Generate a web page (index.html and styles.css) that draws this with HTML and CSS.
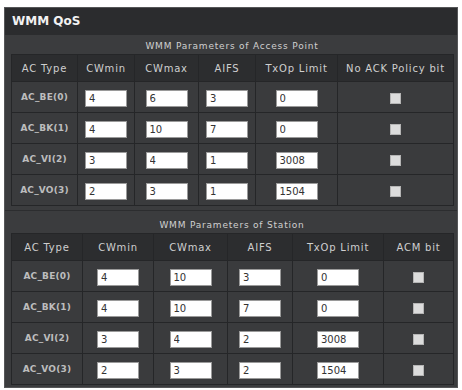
FILE: index.html
```html
<!DOCTYPE html>
<html lang="en">
<head>
    <meta charset="UTF-8">
    <title>WMM QoS</title>
    <link rel="stylesheet" href="styles.css">
</head>
<body>
    <div class="panel">
        <div class="panel-title">WMM QoS</div>

        <div class="section">
            <div class="caption">WMM Parameters of Access Point</div>
            <table class="wmm ap">
                <colgroup>
                    <col style="width:66px">
                    <col style="width:57px">
                    <col style="width:64px">
                    <col style="width:57px">
                    <col style="width:82px">
                    <col style="width:116px">
                </colgroup>
                <tr>
                    <th>AC Type</th>
                    <th>CWmin</th>
                    <th>CWmax</th>
                    <th>AIFS</th>
                    <th>TxOp Limit</th>
                    <th>No ACK Policy bit</th>
                </tr>
                <tr>
                    <td class="ac">AC_BE(0)</td>
                    <td><input type="text" value="4"></td>
                    <td><input type="text" value="6"></td>
                    <td><input type="text" value="3"></td>
                    <td><input type="text" value="0"></td>
                    <td><input type="checkbox"></td>
                </tr>
                <tr>
                    <td class="ac">AC_BK(1)</td>
                    <td><input type="text" value="4"></td>
                    <td><input type="text" value="10"></td>
                    <td><input type="text" value="7"></td>
                    <td><input type="text" value="0"></td>
                    <td><input type="checkbox"></td>
                </tr>
                <tr>
                    <td class="ac">AC_VI(2)</td>
                    <td><input type="text" value="3"></td>
                    <td><input type="text" value="4"></td>
                    <td><input type="text" value="1"></td>
                    <td><input type="text" value="3008"></td>
                    <td><input type="checkbox"></td>
                </tr>
                <tr>
                    <td class="ac">AC_VO(3)</td>
                    <td><input type="text" value="2"></td>
                    <td><input type="text" value="3"></td>
                    <td><input type="text" value="1"></td>
                    <td><input type="text" value="1504"></td>
                    <td><input type="checkbox"></td>
                </tr>
            </table>
        </div>

        <div class="section station">
            <div class="caption">WMM Parameters of Station</div>
            <table class="wmm">
                <colgroup>
                    <col style="width:71px">
                    <col style="width:71px">
                    <col style="width:74px">
                    <col style="width:65px">
                    <col style="width:91px">
                    <col style="width:70px">
                </colgroup>
                <tr>
                    <th>AC Type</th>
                    <th>CWmin</th>
                    <th>CWmax</th>
                    <th>AIFS</th>
                    <th>TxOp Limit</th>
                    <th>ACM bit</th>
                </tr>
                <tr>
                    <td class="ac">AC_BE(0)</td>
                    <td><input type="text" value="4"></td>
                    <td><input type="text" value="10"></td>
                    <td><input type="text" value="3"></td>
                    <td><input type="text" value="0"></td>
                    <td><input type="checkbox"></td>
                </tr>
                <tr>
                    <td class="ac">AC_BK(1)</td>
                    <td><input type="text" value="4"></td>
                    <td><input type="text" value="10"></td>
                    <td><input type="text" value="7"></td>
                    <td><input type="text" value="0"></td>
                    <td><input type="checkbox"></td>
                </tr>
                <tr>
                    <td class="ac">AC_VI(2)</td>
                    <td><input type="text" value="3"></td>
                    <td><input type="text" value="4"></td>
                    <td><input type="text" value="2"></td>
                    <td><input type="text" value="3008"></td>
                    <td><input type="checkbox"></td>
                </tr>
                <tr>
                    <td class="ac">AC_VO(3)</td>
                    <td><input type="text" value="2"></td>
                    <td><input type="text" value="3"></td>
                    <td><input type="text" value="2"></td>
                    <td><input type="text" value="1504"></td>
                    <td><input type="checkbox"></td>
                </tr>
            </table>
        </div>
    </div>
</body>
</html>
```

FILE: styles.css
```css
* {
    box-sizing: border-box;
    margin: 0;
    padding: 0;
}

body {
    background-color: #ffffff;
    font-family: "DejaVu Sans", Verdana, sans-serif;
    padding: 7px 4px 0 4px;
}

.panel {
    width: 454px;
    height: 381px;
    background-color: #3b3c3e;
    border: 1px solid #555658;
    color: #c9c9c9;
    overflow: hidden;
}

.panel-title {
    height: 27px;
    line-height: 26px;
    padding-left: 7px;
    background-color: #2b2c2e;
    color: #f2f2f2;
    font-size: 12px;
    font-weight: bold;
}

.section {
    padding: 0 4px 0 6px;
}

.caption {
    height: 19px;
    line-height: 22px;
    text-align: center;
    font-size: 9px;
    letter-spacing: 0.8px;
    color: #d0d0d0;
}

.station {
    margin-top: 4px;
    padding-top: 3px;
    border-top: 1px solid #2c2d2f;
}

.wmm {
    width: 442px;
    table-layout: fixed;
    border-collapse: collapse;
}

.wmm th,
.wmm td {
    border: 1px solid #252628;
    text-align: center;
    vertical-align: middle;
}

.wmm th {
    height: 27px;
    background-color: #2c2d2f;
    font-size: 10px;
    font-weight: normal;
    letter-spacing: 0.8px;
    color: #cfcfcf;
}

.wmm td {
    height: 31px;
    background-color: #3a3b3d;
}

.wmm td.ac {
    font-size: 9px;
    font-weight: bold;
    letter-spacing: 0.2px;
    color: #bdbdbd;
}

.wmm input[type="text"] {
    width: 42px;
    height: 17px;
    padding: 0 3px;
    border: 1px solid #9a9a9a;
    background-color: #ffffff;
    font-family: "DejaVu Sans", Verdana, sans-serif;
    font-size: 10px;
    color: #333;
    vertical-align: middle;
}

.wmm input[type="checkbox"] {
    appearance: none;
    width: 11px;
    height: 11px;
    border: 1px solid #b5b5b5;
    background-color: #dcdcdc;
    vertical-align: middle;
}
```
